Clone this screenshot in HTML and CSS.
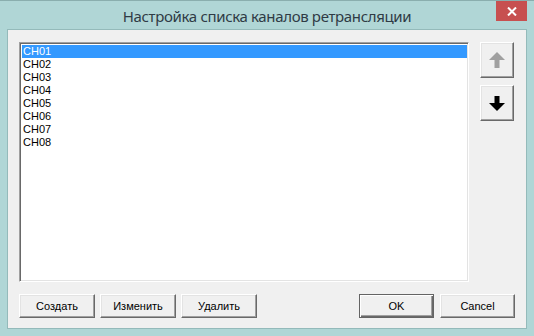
FILE: index.html
```html
<!DOCTYPE html>
<html lang="ru">
<head>
<meta charset="UTF-8">
<title>Настройка списка каналов ретрансляции</title>
<link rel="stylesheet" href="styles.css">
</head>
<body>

<div class="window">
    <div class="titlebar">
        <span class="title">Настройка списка каналов ретрансляции</span>
        <button class="close-btn" title="Закрыть">
            <svg width="10" height="9" viewBox="0 0 10 9">
                <path d="M1 0.5 L9 8.5 M9 0.5 L1 8.5" stroke="#fff" stroke-width="2"/>
            </svg>
        </button>
    </div>

    <div class="client">
        <div class="top-row">
            <ul class="listbox">
                <li class="selected">CH01</li>
                <li>CH02</li>
                <li>CH03</li>
                <li>CH04</li>
                <li>CH05</li>
                <li>CH06</li>
                <li>CH07</li>
                <li>CH08</li>
            </ul>
            <div class="side-buttons">
                <button class="btn arrow-btn" disabled>
                    <svg width="16" height="18" viewBox="0 0 16 18">
                        <polygon points="8,1 16,9 10.5,9 10.5,17 5.5,17 5.5,9 0,9" fill="#a0a0a0"/>
                    </svg>
                </button>
                <button class="btn arrow-btn">
                    <svg width="16" height="15" viewBox="0 0 16 15">
                        <polygon points="5.5,0 10.5,0 10.5,7 16,7 8,15 0,7 5.5,7" fill="#000"/>
                    </svg>
                </button>
            </div>
        </div>

        <div class="bottom-row">
            <div class="group">
                <button class="btn wide">Создать</button>
                <button class="btn wide">Изменить</button>
                <button class="btn wide">Удалить</button>
            </div>
            <div class="group">
                <button class="btn dlg default">OK</button>
                <button class="btn dlg">Cancel</button>
            </div>
        </div>
    </div>
</div>

</body>
</html>
```

FILE: styles.css
```css
body {
  margin: 0;
  padding: 0;
  background: #b0d6d6;
  font-family: 'Liberation Sans', Arial, sans-serif;
  font-size: 11px;
}
.window {
  width: 534px;
  height: 336px;
  box-sizing: border-box;
  background: #b0d6d6;
  border-top: 1px solid #8aaeae;
  padding: 0 7px 7px 7px;
}
.titlebar {
  position: relative;
  height: 28px;
  display: flex;
  align-items: center;
  justify-content: center;
}
.title {
  font-family: 'Noto Sans', 'Open Sans', sans-serif;
  font-size: 15px;
  color: #2f3b45;
  padding-top: 1px;
  letter-spacing: -0.35px;
}
.close-btn {
  position: absolute;
  top: 0;
  right: 0;
  width: 31px;
  height: 20px;
  border: none;
  padding: 0;
  background: #c75050;
  display: flex;
  align-items: center;
  justify-content: center;
}
.client {
  background: #f0f0f0;
  border: 1px solid #94baba;
  padding: 12px 11px 0 11px;
  height: 286px;
  display: flex;
  flex-direction: column;
}
.top-row {
  display: flex;
  gap: 11px;
}
.listbox {
  list-style: none;
  margin: 0;
  padding: 2px 1px 0 2px;
  width: 450px;
  height: 240px;
  box-sizing: border-box;
  background: #fff;
  border: 1px solid;
  border-color: #a0a0a0 #fff #fff #a0a0a0;
  box-shadow: inset 1px 1px #696969, inset -1px -1px #e3e3e3;
}
.listbox li {
  height: 13px;
  line-height: 13px;
  padding-left: 1px;
  color: #000;
}
.listbox li.selected {
  background: #3399ff;
  color: #fff;
}
.side-buttons {
  display: flex;
  flex-direction: column;
  gap: 7px;
}
.btn {
  font-family: 'Liberation Sans', Arial, sans-serif;
  font-size: 11px;
  color: #000;
  background: #f0f0f0;
  border: 1px solid;
  border-color: #fff #696969 #696969 #fff;
  box-shadow: inset -1px -1px #a0a0a0, inset 1px 1px #e3e3e3;
  padding: 0;
  box-sizing: border-box;
}
.arrow-btn {
  width: 34px;
  height: 36px;
  display: flex;
  align-items: center;
  justify-content: center;
}
.bottom-row {
  margin-top: 12px;
  display: flex;
  justify-content: space-between;
}
.group {
  display: flex;
  gap: 5px;
}
.wide {
  width: 76px;
  height: 24px;
}
.dlg {
  width: 75px;
  height: 24px;
}
.group .dlg + .dlg {
  margin-left: 1px;
}
.default {
  border: 1px solid #646464;
  box-shadow: inset 1px 1px #fff, inset -1px -1px #696969, inset -2px -2px #a0a0a0;
}
```
